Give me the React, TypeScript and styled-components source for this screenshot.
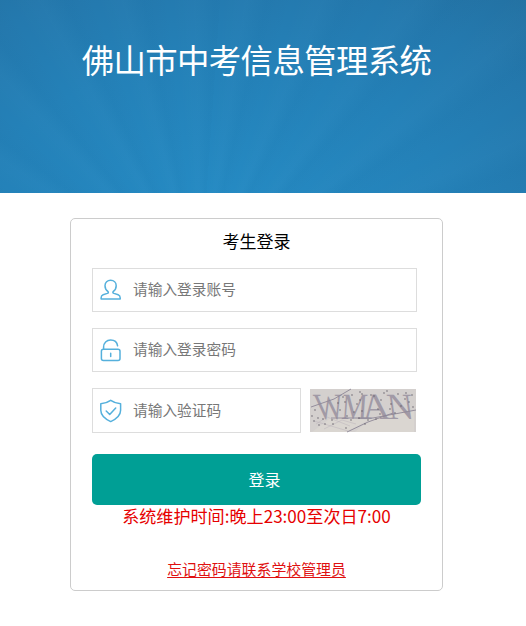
import React from "react";
import styled, { createGlobalStyle } from "styled-components";

const Global = createGlobalStyle`
  * { box-sizing: border-box; }
  body {
    margin: 0;
    background: #fff;
    font-family: "Noto Sans CJK SC", "Noto Sans", sans-serif;
  }
`;

const Page = styled.div`
  display: flex;
  flex-direction: column;
  align-items: center;
  width: 526px;
  height: 626px;
  overflow: hidden;
`;

const Banner = styled.header`
  display: flex;
  justify-content: center;
  width: 100%;
  height: 193px;
  padding: 35px 13px 0 0;
  background:
    repeating-conic-gradient(
      from 4deg at 38% 150%,
      rgba(255, 255, 255, 0) 0deg,
      rgba(255, 255, 255, 0.01) 5deg,
      rgba(0, 40, 80, 0.018) 9deg,
      rgba(255, 255, 255, 0) 14deg
    ),
    radial-gradient(ellipse 460px 290px at 41% 108%, #258bc4 0%, #2481b8 50%, #2479ae 78%, #2371a2 100%);
`;

const Title = styled.h1`
  margin: 0;
  height: 48px;
  color: #fff;
  font-size: 32.4px;
  font-weight: 400;
  line-height: 48px;
  letter-spacing: -0.6px;
  white-space: nowrap;
`;

const Card = styled.main`
  display: flex;
  flex-direction: column;
  align-self: flex-start;
  width: 373px;
  height: 373px;
  margin: 25px 0 0 70px;
  padding: 0 21px;
  border: 1px solid #ccc;
  border-radius: 5px;
`;

const Heading = styled.h2`
  margin: 9px 0 15px;
  height: 25px;
  font-size: 17px;
  font-weight: 400;
  line-height: 25px;
  color: #000;
  text-align: center;
`;

const Row = styled.div`
  display: flex;
  gap: 9px;
  margin-bottom: 16px;
`;

const Field = styled.label<{ $width: number; $height?: number }>`
  display: flex;
  align-items: center;
  width: ${(p) => p.$width}px;
  height: ${(p) => p.$height ?? 44}px;
  padding-left: 6px;
  border: 1px solid #ddd;
`;

const Icon = styled.svg`
  flex: none;
  width: 24px;
  height: 24px;
  fill: none;
  stroke: #55b0dc;
  stroke-width: 1.5;
  stroke-linecap: round;
  stroke-linejoin: round;
`;

const Input = styled.input`
  flex: 1;
  min-width: 0;
  height: 30px;
  margin-left: 10px;
  padding: 0 0 3px;
  border: 0;
  outline: 0;
  background: transparent;
  font-family: inherit;
  font-size: 14.7px;
  &::placeholder { color: #777; opacity: 1; }
`;

const Captcha = styled.svg`
  width: 106px;
  height: 43px;
  margin-top: 1px;
  background: #d4d0ce;
  overflow: visible;
`;

const CaptchaLetter = styled.text`
  font-family: "Liberation Serif", serif;
  font-size: 37px;
  fill: #a19aa6;
`;

const Submit = styled.button`
  width: 329px;
  height: 51px;
  margin-top: 5px;
  padding: 0 0 1px 16px;
  flex: none;
  border: 0;
  border-radius: 5px;
  background: #009f95;
  color: #fff;
  font-family: inherit;
  font-size: 16px;
`;

const Notice = styled.p`
  margin: -1px 0 0;
  height: 24px;
  line-height: 24px;
  font-size: 17.1px;
  color: #e60000;
  text-align: center;
  white-space: nowrap;
`;

const Help = styled.a`
  align-self: center;
  margin-top: 29px;
  font-size: 14.9px;
  line-height: 24px;
  color: #e01010;
  text-decoration: underline;
  text-decoration-thickness: 1px;
  text-underline-offset: 2px;
  white-space: nowrap;
`;

const UserIcon = () => (
  <Icon viewBox="0 0 24 24">
    <path d="M9.1 13.6C7.100 12.200 6 9.900 6 7.700 6 4.500 8.400 2.300 11.600 2.300s5.600 2.200 5.600 5.400c0 2.200-1.100 4.500-3.100 5.900-.5.800-.2 1.400.9 1.800l4.200 1.400c1.400.5 2 1.400 2 3.100v1H2.100v-1c0-1.700.6-2.600 2-3.100l4.200-1.400c1.100-.4 1.300-1 .8-1.800Z" />
  </Icon>
);

const LockIcon = () => (
  <Icon viewBox="0 0 24 24">
    <rect x="2.4" y="11.3" width="18.6" height="11.3" rx="2" />
    <path d="M4.600 11.200V9c0-4 3-7 7-7 3.700 0 6.500 2.400 7 5.800M11.700 15.300v3.300" />
  </Icon>
);

const ShieldIcon = () => (
  <Icon viewBox="0 0 24 24">
    <path d="M11.7 1.300c3 2.200 6.200 3 9.900 3.400v6.600c0 5.100-4.200 8.700-9.900 11.300C6 20 1.800 16.400 1.800 11.300V4.700C5.500 4.300 8.700 3.500 11.700 1.300ZM7.200 12l3.500 3.500 6-6.500" />
  </Icon>
);

const specks: number[][] = [
  [5, 21], [2, 27], [4, 32], [8, 29], [9, 36], [13, 30], [22, 31], [23, 35], [33, 8],
  [35, 13], [42, 6], [50, 3], [52, 5], [50, 11], [61, 6], [64, 7], [71, 11], [74, 4],
  [77, 2], [81, 15], [80, 20], [85, 24], [88, 5], [95, 10], [96, 4], [99, 13], [102, 6],
  [36, 39], [41, 31], [49, 29], [52, 22], [58, 31], [66, 30], [70, 25], [44, 23], [30, 21],
  [37, 27], [47, 15], [103, 18], [15, 35], [55, 35], [91, 17], [68, 20], [28, 14],
];

const CaptchaImage = () => (
  <Captcha viewBox="0 0 106 43" aria-label="验证码">
    <path d="M2 43 22 28 58 31 37 43ZM61 29 104 22V43H45Z" fill="#dedbd4" opacity=".6" />
    <path d="M6 35 17 28 40 37M14 40 32 31 46 35M4 32 38 42" stroke="#b9b2ba" strokeWidth=".8" fill="none" opacity=".6" />
    <CaptchaLetter transform="translate(7 29.500) skewX(10) scale(.82 1)">W</CaptchaLetter>
    <CaptchaLetter transform="translate(31 29.500) skewX(-4) scale(.78 1)">M</CaptchaLetter>
    <CaptchaLetter transform="translate(53 29.500) skewX(6) scale(1.05 1)">A</CaptchaLetter>
    <CaptchaLetter transform="translate(79 29.500) skewX(8) scale(.97 1)">N</CaptchaLetter>
    <path d="M1 18 24 10 41 0M21 29H63L106 21M37 43 58 33 83 24" stroke="#8d8796" strokeWidth=".9" fill="none" />
    {specks.map(([x, y]) => (
      <circle key={`${x}-${y}`} cx={x} cy={y} r=".65" fill="#57535e" />
    ))}
  </Captcha>
);

export default function App() {
  return (
    <>
      <Global />
      <Page>
        <Banner>
          <Title>佛山市中考信息管理系统</Title>
        </Banner>
        <Card>
          <Heading>考生登录</Heading>
          <Row>
            <Field $width={325}>
              <UserIcon />
              <Input placeholder="请输入登录账号" />
            </Field>
          </Row>
          <Row>
            <Field $width={325}>
              <LockIcon />
              <Input type="password" placeholder="请输入登录密码" />
            </Field>
          </Row>
          <Row>
            <Field $width={209} $height={45}>
              <ShieldIcon />
              <Input placeholder="请输入验证码" />
            </Field>
            <CaptchaImage />
          </Row>
          <Submit>登录</Submit>
          <Notice>系统维护时间:晚上23:00至次日7:00</Notice>
          <Help>忘记密码请联系学校管理员</Help>
        </Card>
      </Page>
    </>
  );
}
